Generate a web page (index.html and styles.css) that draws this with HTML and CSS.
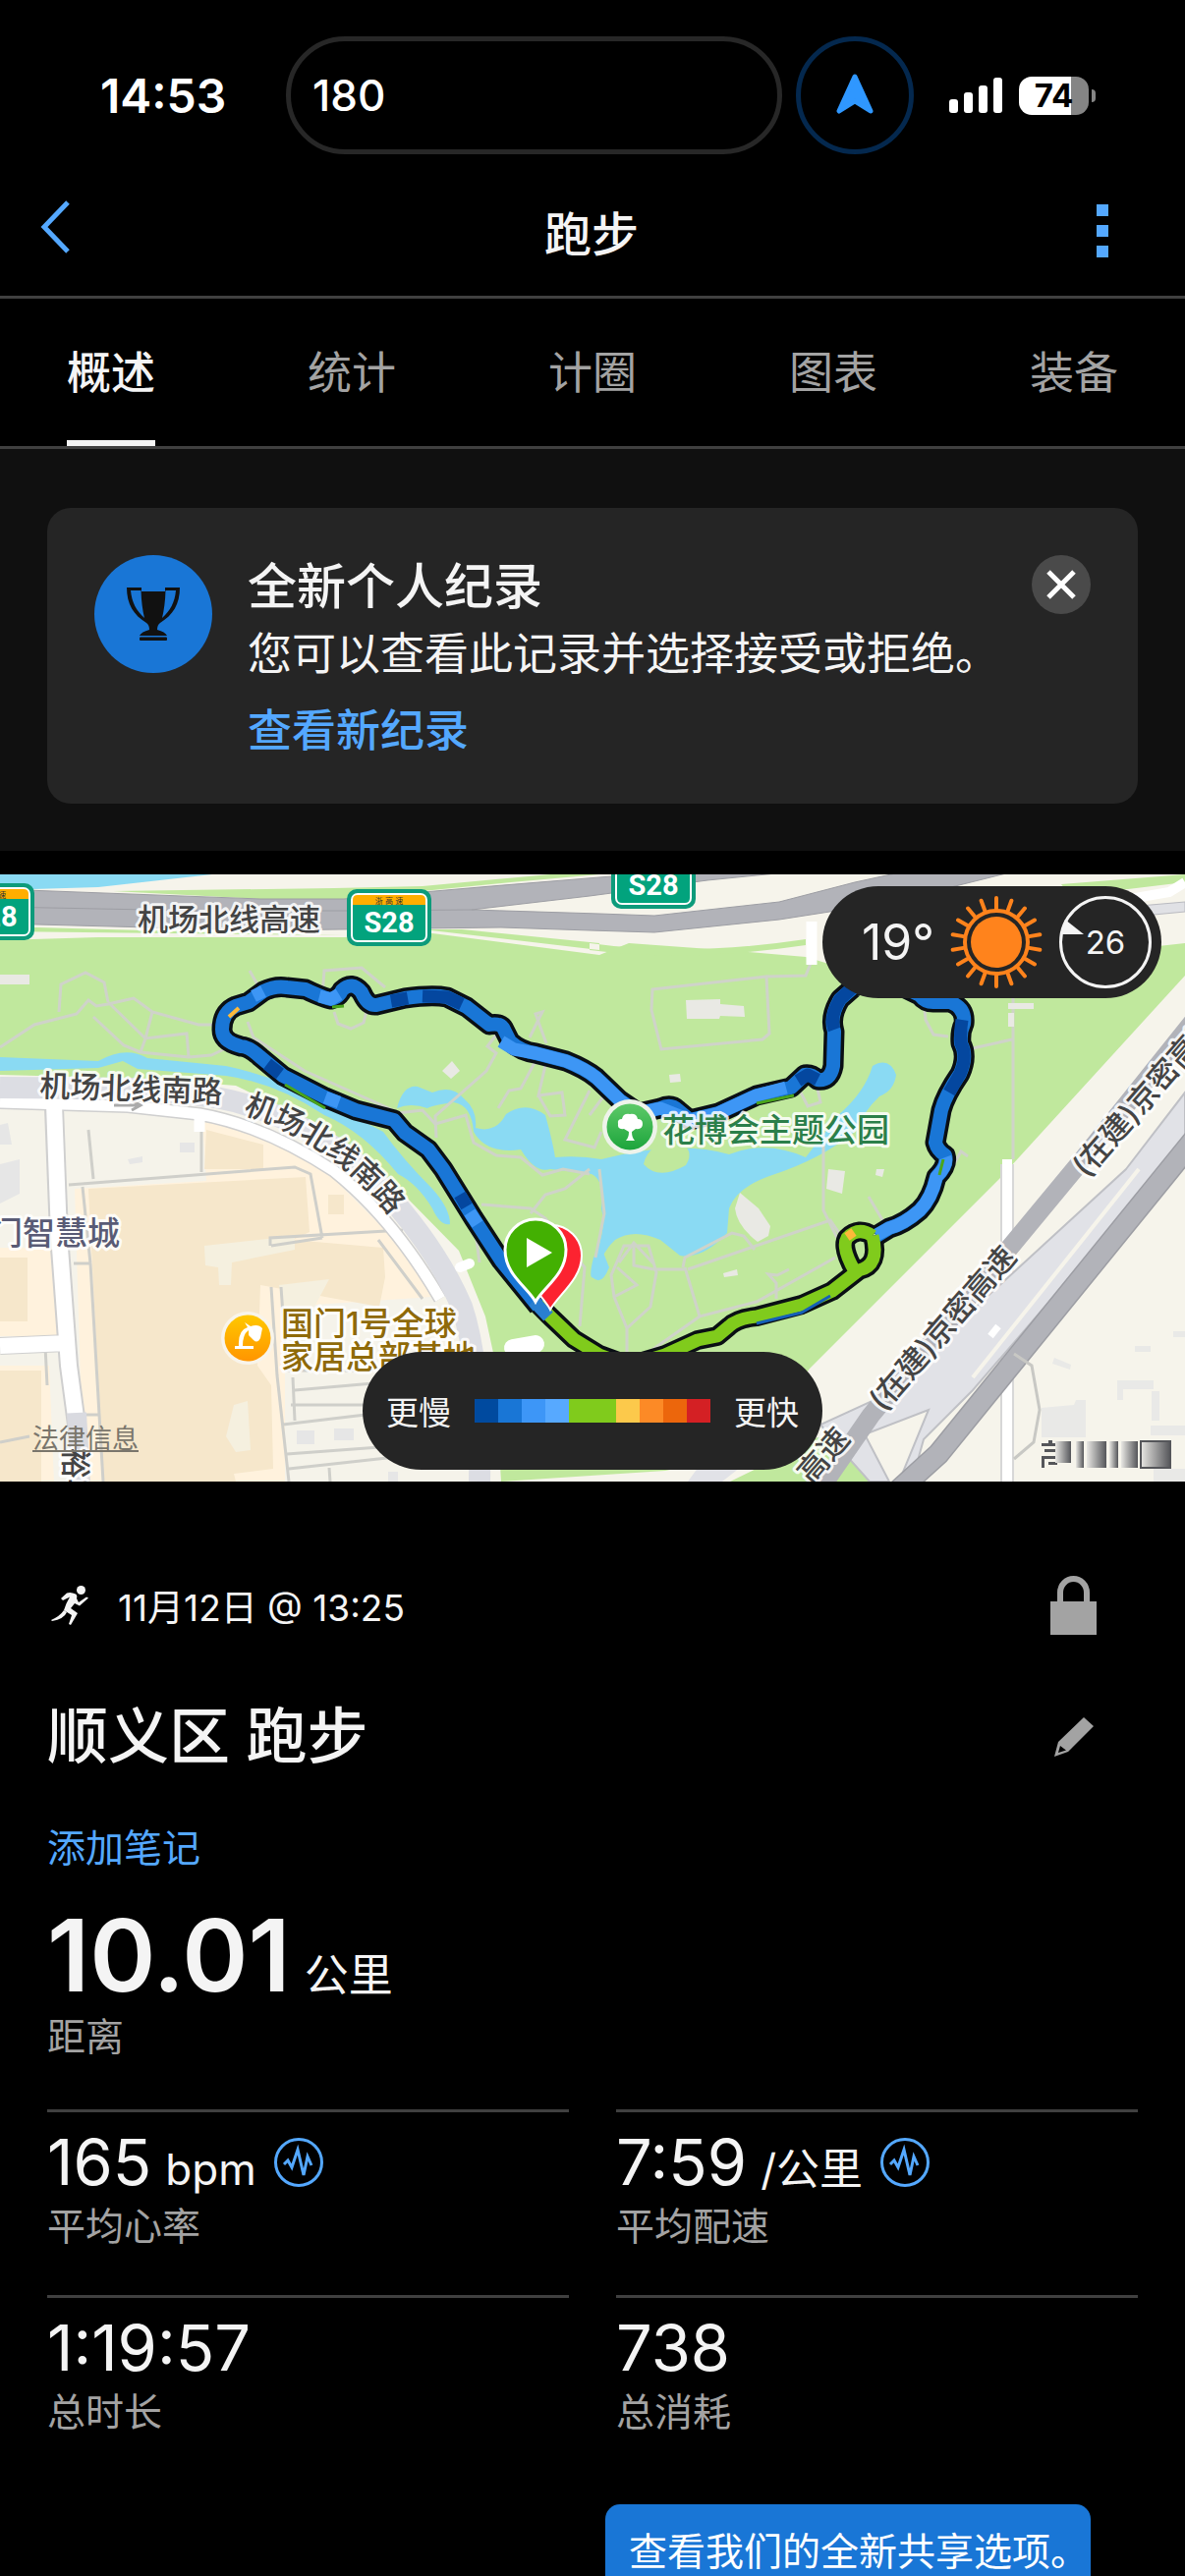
FILE: index.html
```html
<!DOCTYPE html>
<html lang="zh-CN">
<head>
  <meta charset="UTF-8">
  <meta name="viewport" content="width=device-width, initial-scale=1.0">
  <title>跑步</title>
  <link rel="stylesheet" href="styles.css">
</head>
<body>
<div class="app">

  <div class="status-bar">
    <span class="clock">14:53</span>
    <div class="island">180</div>
    <div class="island-dot">
      <svg width="40" height="44" viewBox="0 0 40 44"><path d="M20 3 L36 38 L20 28 L4 38 Z" fill="#2f97ff" stroke="#2f97ff" stroke-width="5" stroke-linejoin="round"/></svg>
    </div>
    <svg class="signal" width="54" height="36" viewBox="0 0 54 36" fill="#fff">
      <rect x="0" y="22" width="9" height="14" rx="3"/>
      <rect x="15" y="15" width="9" height="21" rx="3"/>
      <rect x="30" y="8" width="9" height="28" rx="3"/>
      <rect x="45" y="0" width="9" height="36" rx="3"/>
    </svg>
    <div class="battery"><span>74</span></div>
  </div>

  <header class="nav">
    <button class="icon-btn back" aria-label="返回">
      <svg width="30" height="54" viewBox="0 0 30 54"><path d="M28 2 L4 27 L28 52" fill="none" stroke="#54a8ff" stroke-width="5"/></svg>
    </button>
    <h1>跑步</h1>
    <button class="icon-btn more" aria-label="更多">
      <svg width="12" height="54" viewBox="0 0 12 54" fill="#54a8ff"><path d="M0 0h12v12H0zM0 21h12v12H0zM0 42h12v12H0z"/></svg>
    </button>
  </header>

  <nav class="tabs">
    <a href="#overview" class="tab active">概述</a>
    <a href="#stats" class="tab">统计</a>
    <a href="#laps" class="tab">计圈</a>
    <a href="#charts" class="tab">图表</a>
    <a href="#gear" class="tab">装备</a>
  </nav>

  <section class="notice">
    <div class="card">
      <div class="trophy">
        <svg width="56" height="56" viewBox="0 0 56 56" fill="#111">
          <path fill-rule="evenodd" d="M1 1H16V5H40V1H55C55 18 48 29 35 37Q32 39 32 44Q40 46 42 50H14Q16 46 24 44Q24 39 21 37C8 29 1 18 1 1ZM5 4C6 16 11 25 19 32Q16 20 15.500 4ZM51 4H40.500Q40 20 37 32C45 25 50 16 51 4Z"/>
          <rect x="14" y="51.500" width="28" height="3.500" rx="1"/>
        </svg>
      </div>
      <div class="card-text">
        <h2>全新个人纪录</h2>
        <p>您可以查看此记录并选择接受或拒绝。</p>
        <a href="#record">查看新纪录</a>
      </div>
      <button class="close" aria-label="关闭">
        <svg width="30" height="30" viewBox="0 0 30 30"><path d="M2 2L28 28M28 2L2 28" stroke="#fff" stroke-width="5"/></svg>
      </button>
    </div>
  </section>

  <section class="map">
    <svg class="map-canvas" viewBox="0 0 1206 618" preserveAspectRatio="xMidYMid slice">
      <defs>
        <path id="route-west" d="M548 440L510 393L482 350L451 300L436 280L412 263L401 250L362 240L331 227L288 205L265 186Q253 175 245 175Q226 170 226 158Q226 140 240 134L253 130L268 119Q280 113 292 115L311 117Q330 126 337 127Q345 125 348 118Q358 108 368 120Q374 134 383 133L412 126Q440 122 455 125L475 135L498 153Q508 151 512 156L519 170Q530 180 545 182L576 190Q596 198 607 207L631 230L650 243L672 238Q683 233 690 240L702 250L731 243L770 225L805 217L819 204Q826 203 832 209Q845 211 848 195L849 160Q844 145 855 127L871 113L905 108L936 123Q942 131 952 130L967 130Q983 136 981 152Q977 160 978 172Q985 185 977 203Q962 225 958 240L952 273Q954 281 962 286Q965 296 953 308Q948 330 936 342Q920 356 905 360L892 368"/>
        <path id="route-east" d="M888 368Q896 398 874 403L847 424L816 438L770 450Q750 452 742 460L730 470L710 474L677 489L640 500L610 489L584 473L560 450L548 438M870 404Q856 380 862 370Q874 358 888 368"/>
        <g id="shield">
          <rect width="86" height="58" rx="10" fill="#0d9b7b"/>
          <rect x="4" y="4" width="78" height="50" rx="7" fill="#fff"/>
          <path d="M6 16V11Q6 6 11 6H75Q80 6 80 11V16Z" fill="#ffae00"/>
          <path d="M6 16H80V47Q80 52 75 52H11Q6 52 6 47Z" fill="#02a37d"/>
          <text x="43" y="15" class="shield-top">浙 高 速</text>
          <text x="43" y="44" class="shield-text">S28</text>
        </g>
        <linearGradient id="tree-bg" x1="0" y1="0" x2="0" y2="1"><stop offset="0" stop-color="#5dc968"/><stop offset="1" stop-color="#1da53c"/></linearGradient>
        <linearGradient id="lamp-bg" x1="0" y1="0" x2="0" y2="1"><stop offset="0" stop-color="#ffc800"/><stop offset="1" stop-color="#ff9500"/></linearGradient>
        <linearGradient id="smear" x1="0" x2="1"><stop offset="0" stop-color="#e8e7e3"/><stop offset="1" stop-color="#55565a"/></linearGradient>
        <path id="curve" d="M247 243Q337 272 396 346"/>
      </defs>

      <rect width="1206" height="618" fill="#f6f4eb"/>

      <!-- park -->
      <path d="M0 67L100 64L350 64L440 60L610 82L640 70L750 78L820 84L890 105L1206 70V103L1017 310L824 503L760 590L677 607L510 618L502 487L494 450L467 383L412 327L330 258L240 215L150 208L0 204Z" fill="#c0e89d"/>
      <path d="M115 17L265 25L350 25L520 8L610 0H560L430 12L340 14ZM0 53L260 60L350 62L0 58ZM430 56L610 77V70L470 56ZM600 70Q700 84 820 66V72Q700 90 600 77ZM1080 10L1206 0V8L1090 22Z" fill="#c0e89d"/>
      <path d="M743 618L800 590L832 573L867 573L894 618Z" fill="#c0e89d"/>
      <path d="M0 0H216L100 13L0 16Z" fill="#8adaf3"/>

      <!-- water -->
      <path d="M0 186L100 190Q128 174 150 187L230 195Q290 208 340 236L390 262Q410 290 440 320Q458 340 458 356Q448 358 440 340Q425 315 405 305Q370 262 330 245Q280 212 230 205L140 198L125 190L100 197L0 200Z" fill="#8adaf3"/>
      <path d="M404 238Q410 214 425 216L440 222Q460 214 472 228Q486 240 484 258Q505 264 515 244Q535 230 555 245Q562 270 565 288Q590 286 612 290Q690 270 742 285Q780 270 820 288L853 245Q880 222 888 195Q905 185 912 204Q910 220 895 226Q880 240 870 262Q835 290 786 306Q750 318 742 340L740 365Q715 392 692 388L672 372Q645 360 626 372Q612 385 605 410Q598 414 604 390Q618 362 612 340Q616 312 602 305L560 300Q545 305 530 280Q495 285 482 262Q480 235 462 232Q440 235 435 238Q418 232 404 238Z" fill="#8adaf3"/>
      <path d="M655 295Q660 272 690 272Q708 280 698 296Q670 312 655 295Z" fill="#c0e89d"/>
      <path d="M614 385Q602 390 603 410Q612 420 620 400Z" fill="#8adaf3"/>

      <!-- paths in the park -->
      <g fill="none" stroke="#cfd3c9" stroke-width="3">
        <path d="M0 176L35 153L78 142L90 128L98 134L110 132L136 126L155 140L202 153H225M60 140L62 112L87 100L106 110L110 130M95 145L126 174L143 181L192 186L215 184L230 177M110 130L148 167L190 162L192 186M148 167L143 181M155 140L148 167M254 98L262 112M328 124L330 98L368 95L392 115M340 140L344 152L357 157L370 151L374 135M252 150L258 166L310 200L400 240"/>
        <path d="M510 157L496 175L505 182L495 200L443 246L444 268M405 243L430 240L443 254L474 245L482 273L505 286L530 288L552 306L573 300L600 305M556 172L545 142L552 140L539 166M545 190L530 218L518 220L507 238M556 190L548 225L572 222L575 245L560 246L548 225M600 220L575 270L605 278L612 262M490 336L540 340L555 350L595 400L590 460M540 345L555 326L575 320L600 300M484 365L488 395"/>
        <path d="M664 117L780 104L783 162L776 168L673 178L663 138ZM780 104L820 103L826 88M940 126L942 148L950 163L965 165M990 177L1030 168M1031 126V290M600 245L615 225M815 222L822 236L835 232L832 218M838 276V342L852 370M884 328L900 355M968 300L978 282L985 287"/>
        <path d="M700 402L845 352L863 378M697 400L712 450L770 435L850 390M695 400L697 390L745 365L757 368L768 382M665 402H697M638 462V490M638 462L625 430L622 408L635 378L660 378L668 405L662 440L638 462M628 400L648 418L625 430M645 375V398L665 402M630 395L645 375L665 396M712 450L655 490M790 432V416L782 407L791 408L803 402M610 300L615 345L606 390"/>
      </g>
      <g fill="#e9e9e4">
        <path d="M0 102H30V112H0ZM698 128L733 127V132L757 134L758 145L733 144L732 147H699ZM681 204L692 203L693 211L682 212ZM1026 131H1052V137H1026ZM1026 141H1032V155H1026ZM450 200L460 190L468 200L459 208ZM843 300L860 302L857 325L841 320ZM892 300H900L898 308L891 306ZM736 406L750 402L751 408L737 410Z"/>
        <path d="M753 324L772 340L784 358L782 368L771 374Q750 358 748 340Z"/>
      </g>

      <!-- expressway S28 -->
      <g fill="#b2b3b9" stroke="#9d9ea4" stroke-width="1">
        <path d="M0 15L265 25L350 25L500 12L610 3L750 -8L860 -8L720 6L600 22L480 36L610 40L666 42L793 28L870 8L930 -5H1040L960 15L870 34L793 46L666 59L600 57L510 54L265 57L0 50Z"/>
        <path d="M0 33L200 37L350 37L480 36" fill="none"/>
      </g>
      <path d="M1090 38L1206 28V38L1100 48Z" fill="#e0e1e5" stroke="#b9bac0"/>
      <path d="M826 92V48" stroke="#fff" stroke-width="11"/>
      <path d="M1150 25L1190 18L1206 8" stroke="#fff" stroke-width="10" fill="none"/>

      <!-- west blocks -->
      <path d="M0 238L200 244L270 260L340 305L400 360L450 430L478 500L482 618H0Z" fill="#f5f3ea"/>
      <path d="M206 250L270 264L340 310L400 370L440 430L290 440V618H85L76 320L210 312Z" fill="#fff2dd"/>
      <path d="M0 380H56L60 470H0ZM0 500H50L55 618H0Z" fill="#fff2dd"/>
      <path d="M210 260L268 275V300H208ZM90 320L311 308L315 364L298 372L390 380L392 410L386 440L265 418L262 500L276 520L278 605L238 610L240 618H105Z" fill="#f6e7cb"/>
      <path d="M334 326H350V346H334ZM0 390H28V455H0ZM0 505H42V618H0Z" fill="#f6e7cb"/>
      <path d="M208 378L300 368V382L236 395L235 418H223L222 400L209 398ZM238 540L252 536L255 586L240 588L230 572ZM284 418L335 412L320 440L290 445Z" fill="#f5f0df"/>
      <path d="M0 255L8 253L12 275H0ZM0 295L20 290V325L0 335ZM183 273H198V283H183ZM130 290L145 287V293L132 295ZM302 566H320V580H302ZM340 564H360V576H340ZM395 608H405V618H395Z" fill="#e6e6e6"/>
      <g fill="none" stroke="#cfcfca" stroke-width="3">
        <path d="M90 260L95 310M205 252V303M70 316L300 298L316 305L328 370M84 318L92 396M275 378V370L410 362M328 370L276 378M385 372L430 432M276 420L282 510L294 618M286 420L292 505H380M298 512L300 556M300 525L380 518M296 540H372M288 560L372 550M292 590L400 582M294 605L430 590L478 600M335 604L336 618M92 396L105 618M75 396H92M46 480L48 520M78 550H100M0 578L30 572"/>
      </g>
      <g fill="none">
        <path d="M55 238L60 367L70 500L78 560" stroke="#cfcfcf" stroke-width="20"/>
        <path d="M0 232L130 236L203 244Q270 256 340 302Q400 350 448 432" stroke="#cfcfcf" stroke-width="14"/>
        <path d="M0 480L68 477" stroke="#cfcfcf" stroke-width="18"/>
        <path d="M55 234L60 367L70 500L78 560M0 480L68 477" stroke="#fff" stroke-width="16"/>
        <path d="M0 232L130 236L203 244Q270 256 340 302Q400 350 448 432M203 240V262" stroke="#fff" stroke-width="11"/>
        <path d="M78 548L82 618" stroke="#d9dae0" stroke-width="20"/>
        <path d="M0 217L140 218L220 227Q300 242 370 300Q440 370 470 440Q490 500 488 618" stroke="#dcdde3" stroke-width="22"/>
        <path d="M468 400L478 396" stroke="#fff" stroke-width="10" stroke-linecap="round"/>
        <path d="M522 482L545 478" stroke="#fff" stroke-width="18" stroke-linecap="round"/>
      </g>
      <path d="M116 235H142M134 230L143 235L134 240" stroke="#aaa" stroke-width="3" fill="none"/>

      <!-- east expressway -->
      <path d="M1025 295V618" stroke="#d7d7d7" stroke-width="14"/>
      <path d="M1025 290V618" stroke="#fff" stroke-width="10"/>
      <path d="M1146 300L1206 222V275L990 525L940 575L928 618H915L945 545L880 570L905 618H885L860 590L835 560L890 535Z" fill="#e1e2e7" stroke="#bfc0c5" stroke-width="2"/>
      <path d="M700 618L735 570L790 575L735 618Z" fill="#e1e2e7"/>
      <path d="M1102 290L886 551L835 625M1230 130L1102 290" stroke="#b2b3b9" stroke-width="19" fill="none"/>
      <path d="M1220 264L955 590L900 640" stroke="#9d9ea4" stroke-width="23" fill="none"/>
      <path d="M1220 264L955 590L900 640" stroke="#b2b3b9" stroke-width="20" fill="none"/>
      <path d="M1159 300L990 512" stroke="#f6f4eb" stroke-width="4"/>
      <path d="M1008 470L1016 460" stroke="#fff" stroke-width="7"/>
      <path d="M1032 488L1050 500L1058 545L1052 578L1032 595" stroke="#c8c8c4" stroke-width="3" fill="none"/>
      <path d="M1060 543L1093 540L1095 535H1105V573H1060ZM1137 515H1174V524H1143V535H1137ZM1172 526H1180V556H1172ZM1155 480H1171V486H1155ZM1194 465H1206V471H1194ZM1171 561H1206V571H1171ZM1174 605H1206V618H1174ZM1073 492L1090 499L1089 504L1071 498Z" fill="#e9e9e7"/>

      <!-- recorded track, coloured by pace -->
      <g fill="none" stroke-linejoin="round">
        <use href="#route-west" stroke="#0a0f14" stroke-width="21"/>
        <use href="#route-east" stroke="#0a0f14" stroke-width="20"/>
        <use href="#route-west" stroke="#1976d6" stroke-width="14"/>
        <path d="M510 170L523 178L545 182L576 190Q596 198 607 207L631 230L650 243L672 238L702 250L731 243L770 225L800 217M258 124L268 119M325 124L337 127L345 122M962 288Q965 296 953 308Q948 330 936 342Q920 356 905 360L892 367M486 356L478 344M345 232L331 227" stroke="#3d96f5" stroke-width="13"/>
        <path d="M430 124L455 125L470 132M398 129L415 126M285 203L272 193M849 158Q844 145 855 127L868 115M979 148Q977 160 978 172Q985 185 977 203L966 222M475 338L468 326M812 210L822 204L832 209" stroke="#04479f" stroke-width="13"/>
        <path d="M290 214L331 238M350 134L338 135M770 233L808 225M960 290L956 306" stroke="#4aa51c" stroke-width="3"/>
        <path d="M233 145L243 136" stroke="#fdb93a" stroke-width="4"/>
        <use href="#route-east" stroke="#80cb1c" stroke-width="13"/>
        <path d="M770 457L816 446L845 429" stroke="#1560b8" stroke-width="3"/>
        <path d="M862 369L869 364" stroke="#fdb93a" stroke-width="9"/>
        <path d="M543 434L558 450" stroke="#2a7fd0" stroke-width="13"/>
      </g>

      <!-- place names -->
      <use href="#shield" x="353" y="15"/>
      <use href="#shield" x="-51" y="9"/>
      <use href="#shield" x="622" y="-23"/>
      <text x="140" y="57" class="road">机场北线高速</text>
      <text transform="translate(40 226) rotate(2)" class="road">机场北线南路</text>
      <text class="road"><textPath href="#curve">机场北线南路</textPath></text>
      <text transform="translate(899 548) rotate(-49)" class="road">(在建)京密高速</text>
      <text transform="translate(1106 310) rotate(-49)" class="road">(在建)京密高速</text>
      <text transform="translate(826 622) rotate(-49)" class="road">高速</text>
      <text transform="translate(66 584) rotate(90)" class="road">裕丰</text>
      <text x="-10" y="377" class="place city">门智慧城</text>
      <text x="674" y="272" class="place park">花博会主题公园</text>
      <text x="286" y="469" class="place home">国门1号全球</text>
      <text x="286" y="503" class="place home">家居总部基地</text>
      <circle cx="641" cy="257" r="28" fill="#eef3ea"/>
      <circle cx="641" cy="257" r="23.500" fill="url(#tree-bg)"/>
      <path d="M637 271Q640 268 640 262L635 259Q628 260 629 254Q628 249 633 249Q634 243 641 244Q648 243 649 249Q654 249 654 254Q654 260 647 259L643 262Q643 268 646 271Z" fill="#fff"/>
      <circle cx="252" cy="472" r="27" fill="#f8f4ea"/>
      <circle cx="252" cy="472" r="23.500" fill="url(#lamp-bg)"/>
      <path d="M239 480H258V483H239ZM243 480Q242 464 252 461L249 456L255 460Q263 457 267 462L265 472Q262 478 258 474L253 469L253 464Q247 468 247 480Z" fill="#fff"/>

      <!-- finish and start pins -->
      <path d="M560 443C552 428 530 412 530 388A31 31 0 0 1 592 388C592 412 568 428 560 443Z" fill="#fc2330" stroke="#fff" stroke-width="2"/>
      <path d="M545 435C537 420 514 408 514 382A31 31 0 0 1 576 382C576 408 553 420 545 435Z" fill="#43b002" stroke="#fff" stroke-width="3"/>
      <path d="M536 370V400L562 385Z" fill="#fff"/>

      <!-- map supplier mark -->
      <g fill="url(#smear)">
        <path d="M1060 579H1078V582H1060ZM1067 576H1071V580H1067ZM1063 585H1076V588H1063ZM1060 592H1076V595H1063V604H1060ZM1067 598H1076V601H1067Z" fill="#55565a"/>
        <rect x="1074" y="577" width="16" height="22"/>
        <rect x="1095" y="577" width="8" height="27"/>
        <rect x="1106" y="577" width="20" height="27"/>
        <rect x="1129" y="577" width="9" height="27"/>
        <rect x="1141" y="577" width="17" height="27"/>
        <rect x="1161" y="577" width="30" height="27" stroke="#55565a" stroke-width="2"/>
      </g>
    </svg>

    <div class="weather">
      <span class="temp">19°</span>
      <svg width="96" height="96" viewBox="-48 -48 96 96">
        <circle r="26" fill="#ff831c"/>
        <circle r="32" fill="none" stroke="#ff831c" stroke-width="4"/>
        <g stroke="#ff831c" stroke-width="4" stroke-linecap="round">
          <path id="rays" d="M0 -34V-45M0 34V45"/>
          <use href="#rays" transform="rotate(20)"/>
          <use href="#rays" transform="rotate(40)"/>
          <use href="#rays" transform="rotate(60)"/>
          <use href="#rays" transform="rotate(80)"/>
          <use href="#rays" transform="rotate(100)"/>
          <use href="#rays" transform="rotate(120)"/>
          <use href="#rays" transform="rotate(140)"/>
          <use href="#rays" transform="rotate(160)"/>
        </g>
      </svg>
      <svg width="96" height="96" viewBox="-48 -48 96 96">
        <circle r="45.500" fill="none" stroke="#f4f4f4" stroke-width="3"/>
        <path d="M-41 -23L-22 -8L-46 -8Z" fill="#f4f4f4"/>
        <text x="0" y="12" class="wind">26</text>
      </svg>
    </div>

    <a class="legal" href="#legal">法律信息</a>

    <div class="legend">
      <span>更慢</span>
      <div class="scale">
        <i class="c1"></i><i class="c2"></i><i class="c3"></i><i class="c4"></i><i class="c5"></i>
        <i class="c5"></i><i class="c6"></i><i class="c7"></i><i class="c8"></i><i class="c9"></i>
      </div>
      <span>更快</span>
    </div>
  </section>

  <main class="details">
    <div class="meta">
      <svg width="44" height="42" viewBox="0 0 44 42" fill="#f4f4f4">
        <circle cx="34.500" cy="5.500" r="4.500"/>
        <path d="M14 14L20 8.500Q24 7 29 9.500Q31 11 30 14L32 18L40 12.500L42 13.500L33 21.500L28 19L24 24L31 29L24 41L22 40L25 31L17 26Q19 19 23 12.500L16 16Z"/>
        <path d="M17 26L20 28Q17 35 5 37L4 36Q13 32 17 26Z"/>
      </svg>
      <span class="date">11月12日 @ 13:25</span>
      <button class="icon-btn lock" aria-label="隐私">
        <svg width="48" height="60" viewBox="0 0 48 60"><path d="M0 26H47V60H0Z" fill="#a3a3a3"/><path d="M10 28V17A13.500 14 0 0 1 37 17V28" fill="none" stroke="#a3a3a3" stroke-width="6"/></svg>
      </button>
    </div>

    <div class="title-row">
      <h2>顺义区 跑步</h2>
      <button class="icon-btn edit" aria-label="编辑">
        <svg width="40" height="40" viewBox="0 0 40 40" fill="#a3a3a3"><path fill-rule="evenodd" d="M30 0L40 9L14 35L0 40L4 25ZM6 29L4 36L12 33.500Z"/></svg>
      </button>
    </div>

    <a class="add-note" href="#note">添加笔记</a>

    <div class="distance">
      <p class="big">10.01 <span>公里</span></p>
      <p class="label">距离</p>
    </div>

    <div class="stats">
      <div class="stat">
        <p class="value">165 <span>bpm</span>
          <svg class="pulse" width="50" height="50" viewBox="0 0 50 50"><circle cx="25" cy="25" r="23.500"/><path d="M10 27L14 23L18 30L24 12L30 38L34 19L38 28"/></svg>
        </p>
        <p class="label">平均心率</p>
      </div>
      <div class="stat">
        <p class="value">7:59 <span>/公里</span>
          <svg class="pulse" width="50" height="50" viewBox="0 0 50 50"><circle cx="25" cy="25" r="23.500"/><path d="M10 27L14 23L18 30L24 12L30 38L34 19L38 28"/></svg>
        </p>
        <p class="label">平均配速</p>
      </div>
      <div class="stat">
        <p class="value">1:19:57</p>
        <p class="label">总时长</p>
      </div>
      <div class="stat">
        <p class="value">738</p>
        <p class="label">总消耗</p>
      </div>
    </div>

    <div class="tip">查看我们的全新共享选项。</div>
  </main>

</div>
</body>
</html>
```
FILE: styles.css
```css
* {
  box-sizing: border-box;
}
body {
  margin: 0;
  background: #000;
  color: #f4f4f4;
  font-family: Inter, "Noto Sans CJK SC", sans-serif;
}
h1, h2, p {
  margin: 0;
}
a {
  color: #54a8ff;
  text-decoration: none;
}
svg {
  display: block;
  flex: none;
}
.app {
  height: 100vh;
  overflow: hidden;
}
.icon-btn {
  display: flex;
  padding: 0;
  border: none;
  background: none;
  cursor: pointer;
}

/* status bar */
.status-bar {
  display: flex;
  align-items: center;
  padding: 37px 98px 12px 102px;
  color: #fff;
}
.clock {
  flex: 1;
  font-size: 48px;
  font-weight: 600;
}
.island {
  width: 505px;
  height: 120px;
  padding-left: 22px;
  border: 5px solid #272727;
  border-radius: 60px;
  font-size: 44px;
  font-weight: 500;
  line-height: 110px;
}
.island-dot {
  display: flex;
  align-items: center;
  justify-content: center;
  width: 120px;
  height: 120px;
  margin-left: 14px;
  border: 5px solid #04284e;
  border-radius: 50%;
}
.signal {
  margin-left: 36px;
}
.battery {
  position: relative;
  width: 71px;
  height: 39px;
  margin-left: 17px;
  border-radius: 13px;
  background: linear-gradient(to right, #fff 75%, #858585 75%);
  color: #000;
  font-size: 33px;
  font-weight: 700;
  line-height: 39px;
  text-align: center;
}
.battery::after {
  content: "";
  position: absolute;
  top: 13px;
  right: -7px;
  width: 4px;
  height: 13px;
  border-radius: 0 4px 4px 0;
  background: #858585;
}

/* navigation */
.nav {
  display: flex;
  align-items: center;
  height: 135px;
  padding: 0 78px 0 41px;
  border-bottom: 3px solid #404040;
}
.nav h1 {
  flex: 1;
  font-size: 48px;
  font-weight: 500;
  text-align: center;
}
.back {
  width: 47px;
  padding-bottom: 8px;
}
.tabs {
  display: flex;
  justify-content: space-between;
  padding: 0 68px;
  border-bottom: 3px solid #404040;
}
.tab {
  height: 150px;
  color: #a3a3a3;
  font-size: 45px;
  line-height: 152px;
}
.tab.active {
  border-bottom: 6px solid #f4f4f4;
  color: #f4f4f4;
  font-weight: 500;
}

/* new record notice */
.notice {
  padding: 60px 48px 48px;
  background: #101010;
}
.card {
  display: flex;
  align-items: flex-start;
  padding: 48px 48px 42px;
  border-radius: 24px;
  background: #252525;
}
.trophy {
  display: flex;
  align-items: center;
  justify-content: center;
  width: 120px;
  height: 120px;
  border-radius: 50%;
  background: #1976d6;
}
.card-text {
  flex: 1;
  padding-left: 36px;
  font-size: 45px;
  line-height: 64px;
}
.card-text h2 {
  font-size: 50px;
  font-weight: 500;
}
.card-text p {
  margin: 5px 0 14px;
}
.card-text a {
  display: block;
  font-weight: 500;
}
.close {
  display: flex;
  align-items: center;
  justify-content: center;
  width: 60px;
  height: 60px;
  padding: 0;
  border: none;
  border-radius: 50%;
  background: #4a4a4a;
}

/* map */
.map {
  position: relative;
  height: 618px;
  margin-top: 24px;
}
.map-canvas {
  width: 100%;
  height: 100%;
}
.road, .place {
  font-weight: 500;
  stroke: #fff;
  stroke-opacity: 0.85;
  stroke-width: 6px;
  stroke-linejoin: round;
  paint-order: stroke;
}
.road {
  fill: #444;
  font-size: 31px;
}
.place {
  font-size: 33px;
}
.city {
  fill: #595b75;
}
.park {
  fill: #2b7f4a;
}
.home {
  fill: #8f6a08;
}
.shield-text {
  fill: #fff;
  font-family: Roboto, sans-serif;
  font-size: 29px;
  font-weight: 700;
  text-anchor: middle;
}
.shield-top {
  fill: #333;
  font-size: 8px;
  text-anchor: middle;
}
.weather {
  position: absolute;
  top: 12px;
  right: 24px;
  display: flex;
  align-items: center;
  gap: 15px;
  height: 114px;
  padding: 0 9px 0 40px;
  border-radius: 57px;
  background: #252525;
}
.temp {
  font-size: 50px;
}
.wind {
  fill: #f4f4f4;
  font-size: 33px;
  text-anchor: middle;
}
.legal {
  position: absolute;
  bottom: 26px;
  left: 33px;
  color: #7a766c;
  font-size: 27px;
  text-decoration: underline;
}
.legend {
  position: absolute;
  bottom: 12px;
  left: 50%;
  display: flex;
  align-items: center;
  gap: 24px;
  height: 120px;
  padding: 0 24px;
  border-radius: 60px;
  background: #252525;
  font-size: 33px;
  white-space: nowrap;
  transform: translateX(-50%);
}
.scale {
  display: flex;
}
.scale i {
  width: 24px;
  height: 24px;
}
.c1 { background: #004a9f; }
.c2 { background: #1976d6; }
.c3 { background: #3d96f7; }
.c4 { background: #57a9ff; }
.c5 { background: #80cb1c; }
.c6 { background: #fcc94b; }
.c7 { background: #fc8a26; }
.c8 { background: #ec660c; }
.c9 { background: #d42024; }

/* activity details */
.details {
  padding: 96px 48px 0;
}
.meta {
  display: flex;
  align-items: center;
  height: 60px;
}
.date {
  flex: 1;
  padding-left: 28px;
  font-size: 37px;
}
.lock {
  margin-right: 41px;
}
.title-row {
  display: flex;
  align-items: center;
  justify-content: space-between;
  margin-top: 64px;
}
.title-row h2 {
  font-size: 62px;
  font-weight: 500;
  line-height: 80px;
}
.edit {
  margin-right: 45px;
}
.add-note {
  display: block;
  margin-top: 49px;
  font-size: 39px;
  line-height: 48px;
}
.distance {
  margin: 34px 0 50px;
}
.big {
  display: flex;
  align-items: baseline;
  font-size: 102px;
  font-weight: 600;
  line-height: 102px;
}
.big span {
  padding-left: 14px;
  font-size: 45px;
  font-weight: 400;
  line-height: 45px;
}
.label {
  margin-top: 8px;
  color: #a3a3a3;
  font-size: 39px;
  line-height: 48px;
}
.stats {
  display: grid;
  grid-template-columns: 1fr 1fr;
  column-gap: 48px;
}
.stat {
  height: 189px;
  padding-top: 18px;
  border-top: 3px solid #404040;
}
.value {
  display: flex;
  align-items: baseline;
  font-size: 65px;
  line-height: 66px;
}
.value span {
  padding-left: 14px;
  font-size: 44px;
  line-height: 44px;
}
.pulse {
  align-self: center;
  margin-left: 18px;
  fill: none;
  stroke: #54a8ff;
  stroke-width: 3px;
}
.tip {
  width: fit-content;
  margin: 24px 48px 0 auto;
  padding: 24px 2px 24px 24px;
  border-radius: 15px;
  background: #1976d6;
  color: #fff;
  font-size: 39px;
  line-height: 48px;
}
```
